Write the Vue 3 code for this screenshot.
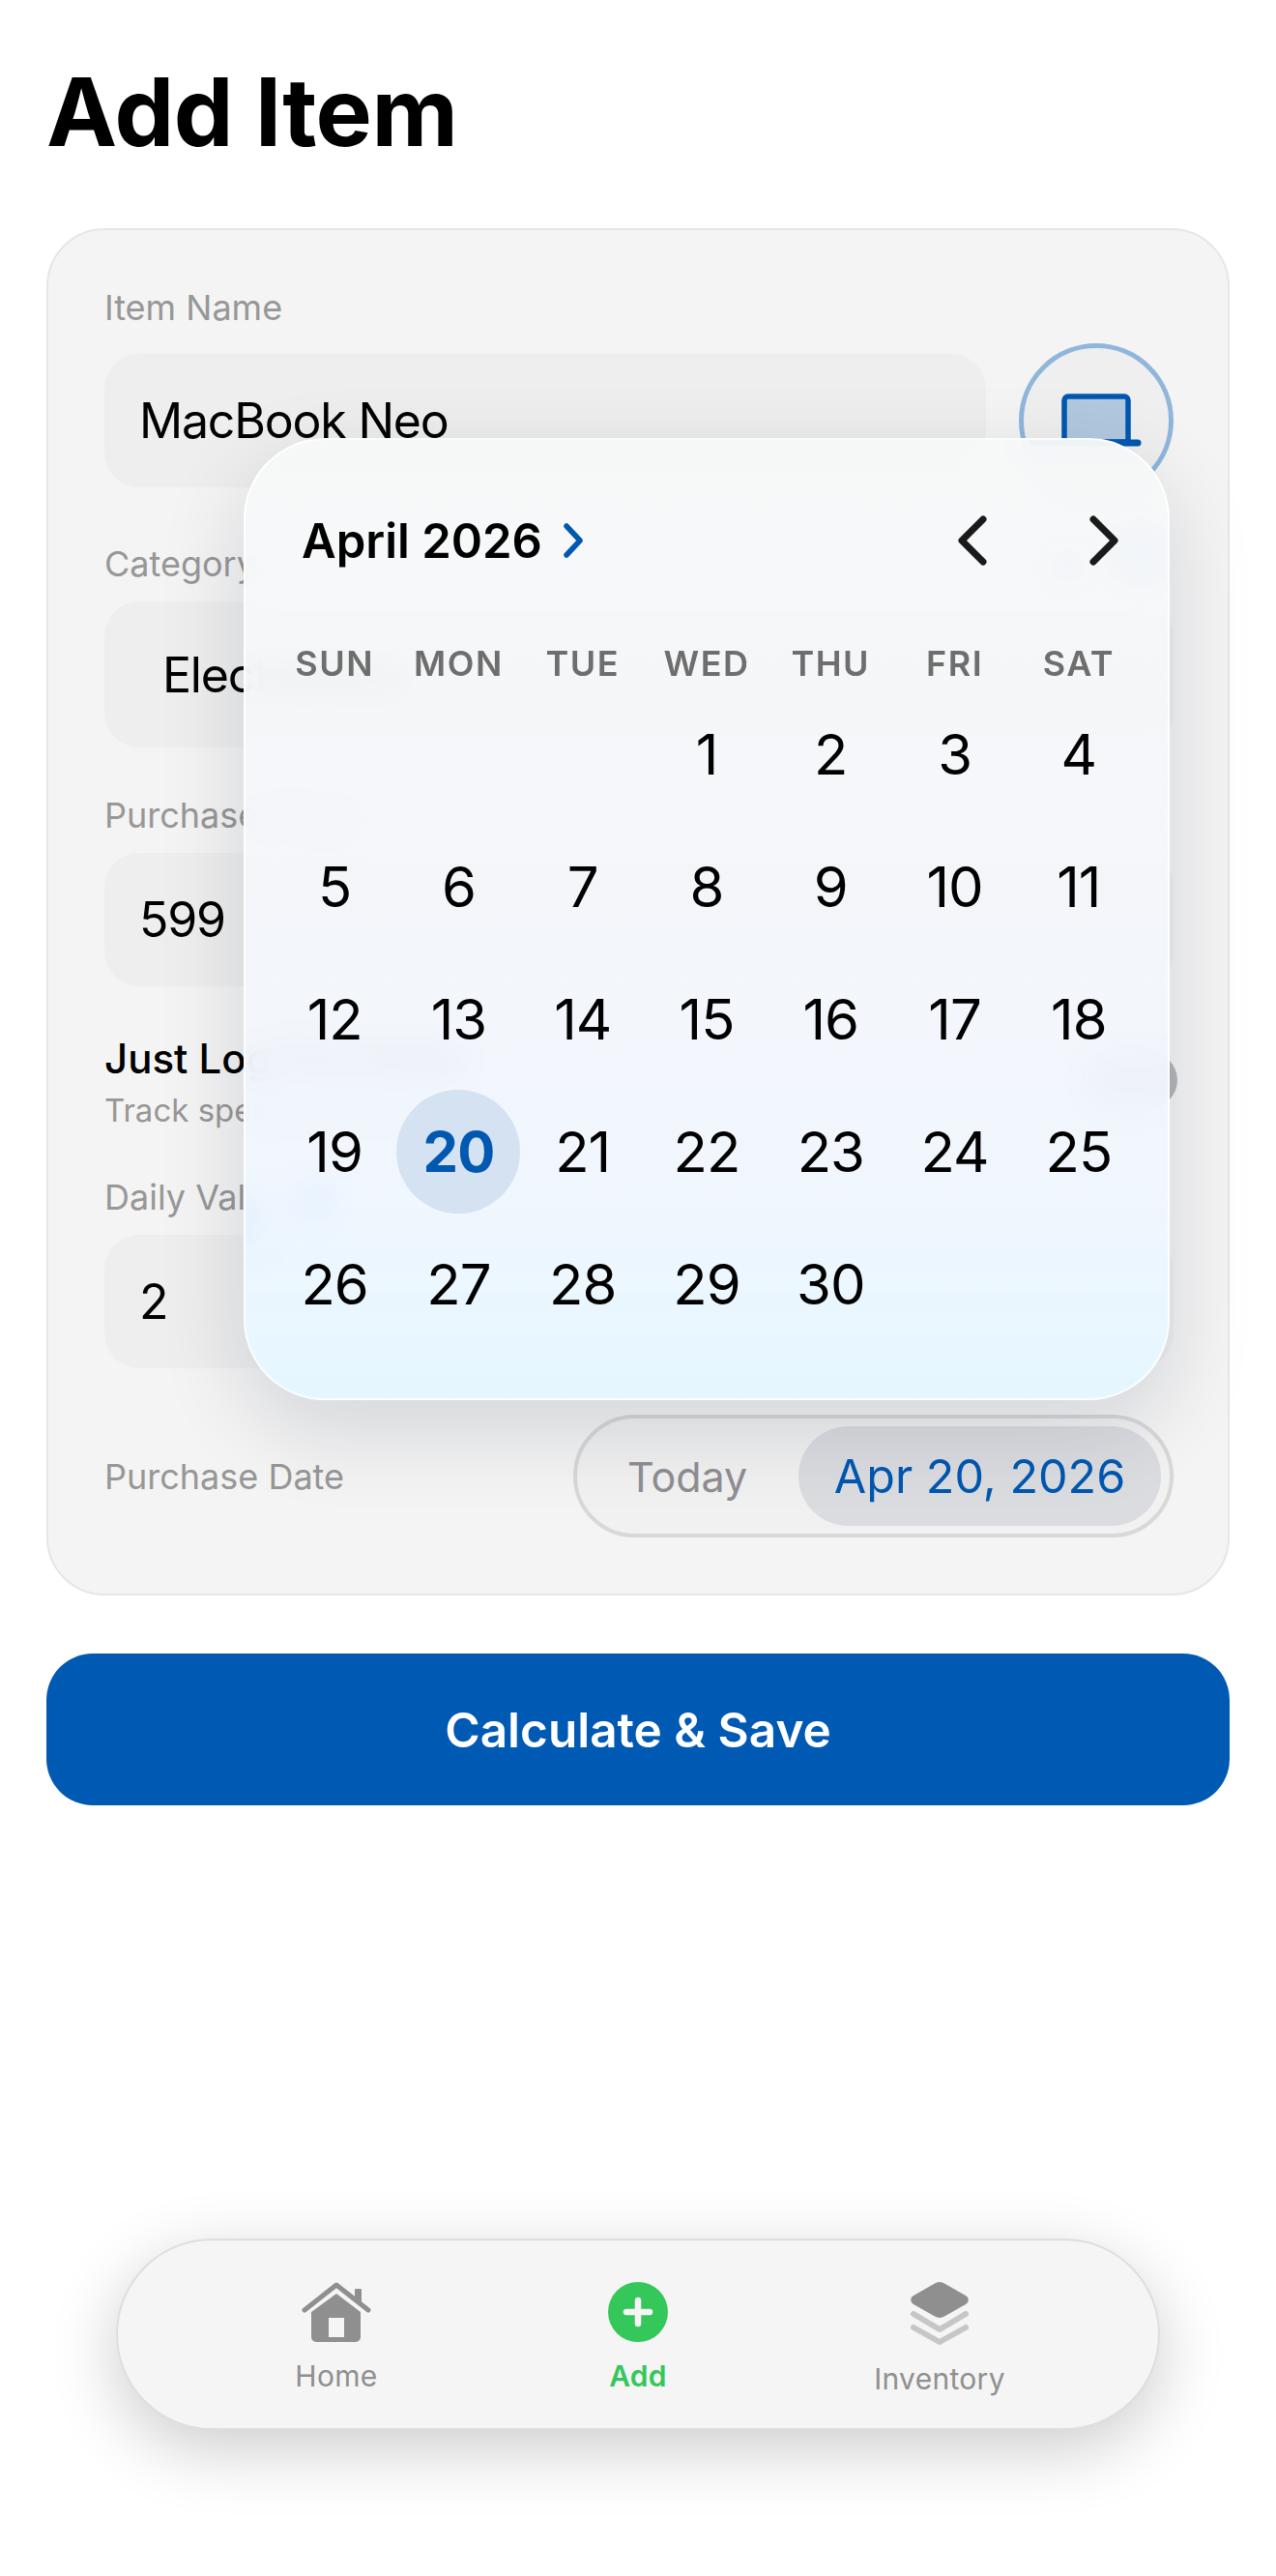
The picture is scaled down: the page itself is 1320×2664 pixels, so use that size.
<script setup>
import { ref } from 'vue'

const itemName = ref('MacBook Neo')
const weekdays = ['SUN', 'MON', 'TUE', 'WED', 'THU', 'FRI', 'SAT']
// April 2026 starts on a Wednesday
const blanks = [1, 2, 3]
const days = Array.from({ length: 30 }, (_, i) => i + 1)
const selected = 20
const tabs = ['Home', 'Add', 'Inventory']
</script>

<template>
  <div class="page">
    <h1 class="title">Add Item</h1>

    <section class="card">
      <div class="field">
        <span class="label">Item Name</span>
        <div class="name-row">
          <div class="input"><span class="input-text">{{ itemName }}</span></div>
          <div class="icon-btn">
            <svg class="laptop" viewBox="0 0 84 56" fill="none">
              <path d="M3 49V6a4 4 0 0 1 4-4h58a4 4 0 0 1 4 4v43z" fill="rgba(0,88,176,.26)" stroke="#0058b0" stroke-width="5.5" stroke-linejoin="round" />
              <path d="M-30 50H79" stroke="#0058b0" stroke-width="7" stroke-linecap="round" />
            </svg>
          </div>
        </div>
      </div>

      <div class="field field-category">
        <span class="label">Category</span>
        <div class="input input-tall"><span class="input-text">Electronics</span></div>
      </div>

      <div class="field field-price">
        <span class="label">Purchase Price</span>
        <div class="input"><span class="input-text">599</span></div>
      </div>

      <div class="toggle-row">
        <div>
          <div class="toggle-title">Just Log Purchase</div>
          <div class="toggle-sub">Track spending daily</div>
        </div>
        <div class="toggle"></div>
      </div>

      <div class="field field-daily">
        <span class="label">Daily Value <i class="blue-dot"></i></span>
        <div class="input"><span class="input-text">2</span></div>
        <i class="blue-tick"></i>
      </div>

      <div class="date-row">
        <span class="label">Purchase Date</span>
        <div class="date-pill">
          <span class="pill-today">Today</span>
          <span class="pill-date">Apr 20, 2026</span>
        </div>
      </div>

      <div class="popover">
        <header class="cal-head">
          <div class="cal-month">
            April 2026
            <svg class="cal-more" viewBox="0 0 22 36" fill="none">
              <path d="M4 3l14 15L4 33" stroke="#0058b0" stroke-width="5.5" stroke-linecap="round" stroke-linejoin="round" />
            </svg>
          </div>
          <div class="cal-nav">
            <svg viewBox="0 0 30 52" fill="none">
              <path d="M26 4L4 26l22 22" stroke="#1a1a1a" stroke-width="7" stroke-linecap="round" stroke-linejoin="round" />
            </svg>
            <svg viewBox="0 0 30 52" fill="none">
              <path d="M4 4l22 22L4 48" stroke="#1a1a1a" stroke-width="7" stroke-linecap="round" stroke-linejoin="round" />
            </svg>
          </div>
        </header>
        <div class="cal-week">
          <span v-for="w in weekdays" :key="w">{{ w }}</span>
        </div>
        <div class="cal-days">
          <span v-for="b in blanks" :key="'b' + b"></span>
          <span
            v-for="d in days"
            :key="d"
            :class="['cal-day', { 'cal-day--on': d === selected }]"
          ><b>{{ d }}</b></span>
        </div>
      </div>
    </section>

    <button class="save">Calculate &amp; Save</button>

    <nav class="tabbar">
      <div v-for="t in tabs" :key="t" :class="['tab', `tab--${t.toLowerCase()}`]">
        <svg v-if="t === 'Home'" class="tab-icon" width="72" height="62" viewBox="0 0 72 62">
          <path d="M3 29L36 3l33 26" fill="none" stroke="#8f8f8f" stroke-width="5" stroke-linecap="round" stroke-linejoin="round" />
          <path d="M55 8a1 1 0 0 1 1-1h5a1 1 0 0 1 1 1v15l-7-6z" fill="#8f8f8f" />
          <path fill-rule="evenodd" d="M36 12l25 19v26a5 5 0 0 1-5 5H15a5 5 0 0 1-5-5V31zM28 37v20h16V37z" fill="#8f8f8f" />
        </svg>
        <svg v-else-if="t === 'Add'" class="tab-icon" width="62" height="62" viewBox="0 0 62 62">
          <circle cx="31" cy="31" r="31" fill="#34c759" />
          <path d="M31 19v24M19 31h24" stroke="#f5f5f5" stroke-width="6.500" stroke-linecap="round" />
        </svg>
        <svg v-else class="tab-icon" width="62" height="65" viewBox="0 0 62 65">
          <path d="M4 33l27 16 27-16" fill="none" stroke="#c6c6c6" stroke-width="6" stroke-linecap="round" stroke-linejoin="round" />
          <path d="M4 47l27 15 27-15" fill="none" stroke="#c6c6c6" stroke-width="6" stroke-linecap="round" stroke-linejoin="round" />
          <path d="M26 1.500a10 10 0 0 1 10 0L58 14a5 5 0 0 1 0 9L36 35.500a10 10 0 0 1-10 0L4 23a5 5 0 0 1 0-9z" fill="#8f8f8f" />
        </svg>
        <span class="tab-label">{{ t }}</span>
      </div>
    </nav>
  </div>
</template>

<style>
html, body { margin: 0; background: #fff; }
</style>

<style scoped>
.page {
  width: 1320px;
  height: 2664px;
  box-sizing: border-box;
  padding: 0 48px;
  display: flex;
  flex-direction: column;
  font-family: Inter, "Liberation Sans", sans-serif;
  color: #000;
  overflow: hidden;
  position: relative;
}

.title {
  margin: 0;
  padding-top: 58px;
  height: 236px;
  flex: none;
  box-sizing: border-box;
  font-size: 98px;
  line-height: 116px;
  font-weight: 700;
  letter-spacing: -0.5px;
}

.card {
  position: relative;
  height: 1414px;
  flex: none;
  box-sizing: border-box;
  padding: 0 56px 0 58px;
  background: #f4f4f4;
  border: 2px solid #e6e6e6;
  border-radius: 60px;
}

.label {
  display: block;
  font-size: 36px;
  line-height: 44px;
  color: #979797;
}

.field { padding-top: 58px; position: relative; }
.field-category { padding-top: 46px; }
.field-price { padding-top: 48px; }
.field-daily { padding-top: 48px; }
.field .label { margin-bottom: 15px; }
.field-category .label, .field-price .label, .field-daily .label { margin-bottom: 17px; }

.input {
  height: 138px;
  display: flex;
  align-items: center;
  padding-left: 36px;
  background: #eeeeee;
  border-radius: 36px;
}
.input-tall {
  height: 151px;
  padding-left: 60px;
}
.input-text {
  font-size: 50px;
  line-height: 60px;
  letter-spacing: -1.2px;
}

.name-row {
  display: flex;
  align-items: center;
  gap: 34px;
}
.name-row .input { flex: 1; }

.icon-btn {
  flex: none;
  width: 160px;
  height: 160px;
  box-sizing: border-box;
  border: 5px solid #90b6dc;
  border-radius: 50%;
  background: #efefef;
  display: flex;
  justify-content: center;
  padding-top: 48px;
}
.laptop {
  width: 84px;
  height: 56px;
  margin-left: 12px;
  overflow: visible;
}

.toggle-row {
  display: flex;
  justify-content: space-between;
  align-items: flex-start;
  padding-top: 50px;
}
.toggle-title {
  font-size: 42px;
  line-height: 50px;
  font-weight: 500;
}
.toggle-sub {
  font-size: 33px;
  line-height: 40px;
  margin-top: 8px;
  color: #979797;
}
.toggle {
  width: 96px;
  height: 58px;
  margin: 18px -4px 0 0;
  border-radius: 29px;
  background: #b5b5b5;
}

.blue-dot {
  position: absolute;
  left: 201px;
  top: 56px;
  width: 34px;
  height: 34px;
  border-radius: 50%;
  background: #0a84ff;
}
.blue-tick {
  position: absolute;
  left: 147px;
  top: 70px;
  width: 12px;
  height: 52px;
  border-radius: 6px;
  background: #0a84ff;
}

.date-row {
  display: flex;
  justify-content: space-between;
  align-items: center;
  margin-top: 48px;
}
.date-pill {
  width: 621px;
  height: 127px;
  box-sizing: border-box;
  border: 4px solid #d8d8d8;
  border-radius: 64px;
  display: flex;
  align-items: center;
  padding: 0 9px 0 52px;
  justify-content: space-between;
  background: rgba(238, 238, 238, .5);
}
.pill-today {
  color: #8e8e93;
  font-size: 43px;
}
.pill-date {
  width: 375px;
  height: 103px;
  box-sizing: border-box;
  border-radius: 52px;
  display: flex;
  align-items: center;
  justify-content: center;
  font-size: 48.500px;
  color: #0058b0;
  background: rgba(200, 203, 210, .55);
}

/* calendario flotante sobre el formulario */
.popover {
  position: absolute;
  left: 202px;
  top: 215px;
  width: 958px;
  height: 995px;
  box-sizing: border-box;
  padding: 59px 28px 0;
  border-radius: 84px;
  border: 2px solid rgba(255, 255, 255, .8);
  background:
    radial-gradient(circle at 925px 117px, rgba(190, 215, 250, .1), transparent 55px),
    radial-gradient(circle at 850px 130px, rgba(190, 215, 250, .06), transparent 40px),
    linear-gradient(180deg, rgba(247, 248, 248, .94) 0%, rgba(244, 246, 250, .94) 45%, rgba(240, 246, 254, .94) 78%, rgba(228, 246, 255, .96) 100%);
  backdrop-filter: blur(16px);
  box-shadow: 0 30px 90px rgba(0, 20, 50, .14);
}

.cal-head {
  height: 90px;
  display: flex;
  align-items: center;
  justify-content: space-between;
  padding-left: 30px;
}
.cal-month {
  display: flex;
  align-items: center;
  gap: 21px;
  font-size: 49px;
  font-weight: 600;
}
.cal-more { width: 22px; height: 36px; }
.cal-nav {
  display: flex;
  gap: 106px;
  padding-right: 23px;
}
.cal-nav svg { width: 30px; height: 52px; }

.cal-week {
  display: grid;
  grid-template-columns: repeat(7, 1fr);
  margin-top: 58px;
  height: 48px;
  align-items: center;
  text-align: center;
  font-size: 36px;
  font-weight: 600;
  letter-spacing: 1.500px;
  color: #6e6e6e;
}

.cal-days {
  display: grid;
  grid-template-columns: repeat(7, 1fr);
  grid-auto-rows: 137px;
  margin-top: 1px;
}
.cal-day {
  display: flex;
  align-items: center;
  justify-content: center;
  font-size: 58px;
  letter-spacing: -1px;
}
.cal-day b {
  font-weight: 400;
  width: 128px;
  height: 128px;
  border-radius: 50%;
  display: flex;
  align-items: center;
  justify-content: center;
}
.cal-day--on b {
  background: #d4e2f1;
  color: #0058b0;
  font-weight: 700;
}

.save {
  margin-top: 60px;
  height: 157px;
  flex: none;
  border: 0;
  border-radius: 48px;
  background: #0059b3;
  color: #fff;
  font-family: inherit;
  font-size: 49.500px;
  font-weight: 600;
}

.tabbar {
  margin: auto 72px 151px;
  height: 198px;
  box-sizing: border-box;
  flex: none;
  padding: 43px 70px 0;
  display: grid;
  grid-template-columns: repeat(3, 1fr);
  background: #f5f5f5;
  border: 2px solid #dedede;
  border-radius: 99px;
  box-shadow: 0 20px 70px rgba(0, 0, 0, .2);
}
.tab {
  display: flex;
  flex-direction: column;
  align-items: center;
  color: #8f8f8f;
}
.tab-icon { flex: none; }
.tab-label {
  font-size: 30px;
  line-height: 36px;
  margin-top: 17px;
  letter-spacing: .3px;
}
.tab--add { color: #34c759; }
.tab--add .tab-label { font-weight: 600; }
</style>
